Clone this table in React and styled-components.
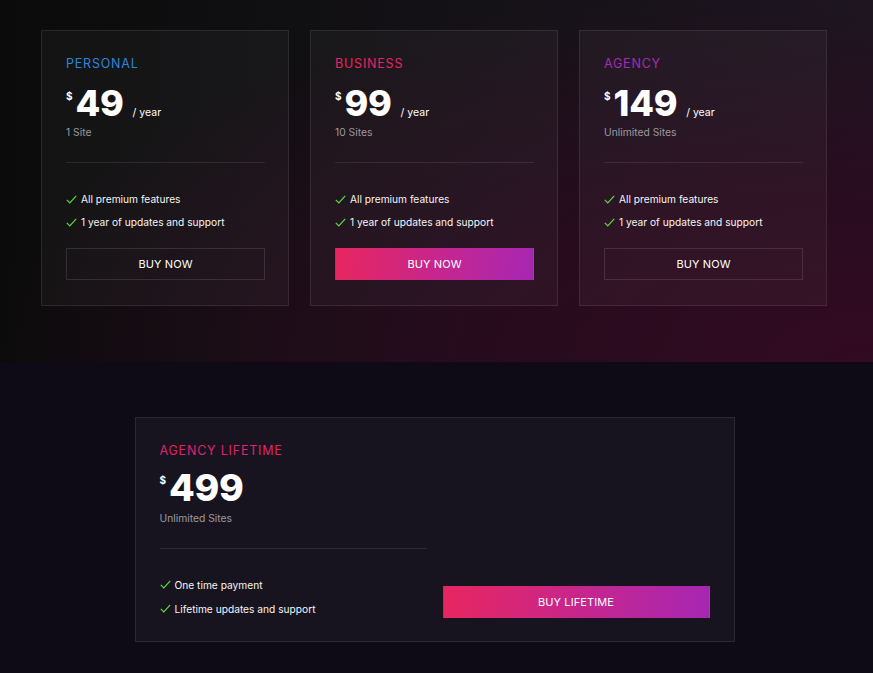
import React from "react";
import styled, { createGlobalStyle } from "styled-components";

const Global = createGlobalStyle`
  html, body { margin: 0; padding: 0; background: #0f0b16; }
  body { font-family: Inter, "Noto Sans", sans-serif; -webkit-font-smoothing: antialiased; }
  * { box-sizing: border-box; }
`;

const Page = styled.div`
  width: 873px;
  min-height: 673px;
  display: flex;
  flex-direction: column;
`;

const TopSection = styled.section`
  height: 362px;
  padding: 30px 5px 0 0;
  display: flex;
  justify-content: center;
  align-items: flex-start;
  gap: 21px;
  background:
    radial-gradient(150% 160% at 100% 100%, rgba(50, 10, 33, 1) 0%, rgba(44, 10, 31, 0.8) 30%, rgba(40, 10, 30, 0) 68%),
    linear-gradient(90deg, #0b0b0b 0%, #131115 50%, #1b1721 100%);
`;

const BottomSection = styled.section`
  flex: 1;
  background: #0f0b16;
  padding: 55px 4px 31px 0;
  display: flex;
  justify-content: center;
`;

const Card = styled.div`
  width: 248px;
  border: 1px solid rgba(255, 255, 255, 0.09);
  background: rgba(255, 255, 255, 0.035);
  padding: 25px 23px 25px 24px;
  display: flex;
  flex-direction: column;
`;

const LifetimeCard = styled.div`
  width: 600px;
  border: 1px solid #2b2733;
  background: #18141f;
  padding: 25px 23px 24px 24px;
  display: grid;
  grid-template-columns: 267px 267px;
  column-gap: 16px;
`;

const Column = styled.div`
  display: flex;
  flex-direction: column;
`;

const RightColumn = styled.div`
  display: flex;
  flex-direction: column;
  justify-content: flex-end;
  margin-bottom: -1px;
`;

const Plan = styled.div`
  font-size: 12.5px;
  line-height: 16px;
  letter-spacing: 0.8px;
  text-transform: uppercase;
  color: ${(p) => p.$color};
`;

const PriceRow = styled.div`
  display: flex;
  align-items: baseline;
  margin-top: ${(p) => p.$gap}px;
  color: #fff;
`;

const Currency = styled.span`
  align-self: flex-start;
  font-size: 10px;
  font-weight: 700;
  line-height: 12px;
  margin-top: 5px;
  margin-right: 3px;
`;

const Amount = styled.span`
  font-size: ${(p) => p.$size}px;
  line-height: ${(p) => p.$size}px;
  font-weight: 800;
  letter-spacing: -0.3px;
`;

const Period = styled.span`
  font-size: 10.5px;
  margin-left: 9px;
  color: #fff;
`;

const Sites = styled.div`
  margin-top: 4px;
  font-size: 10.3px;
  line-height: 14px;
  color: #9c9aa0;
`;

const Divider = styled.hr`
  border: none;
  height: 1px;
  margin: 23px 0 0;
  background: rgba(255, 255, 255, 0.09);
`;

const Features = styled.ul`
  list-style: none;
  margin: ${(p) => p.$mt}px 0 0;
  padding: 0;
  display: flex;
  flex-direction: column;
  gap: ${(p) => p.$gap}px;
`;

const Feature = styled.li`
  display: flex;
  align-items: center;
  gap: 4px;
  font-size: 10.2px;
  line-height: 14px;
  color: #f4f4f4;
`;

const Button = styled.button`
  margin-top: ${(p) => p.$mt || 0}px;
  height: 32px;
  width: 100%;
  font-family: Inter, "Noto Sans", sans-serif;
  font-size: 11px;
  letter-spacing: 0.1px;
  color: #fff;
  cursor: pointer;
  border: 1px solid ${(p) => (p.$primary ? "transparent" : "rgba(255,255,255,0.12)")};
  background: ${(p) =>
    p.$primary ? "linear-gradient(100deg, #e8265f 0%, #c42690 55%, #a627b3 100%)" : "transparent"};
`;

const Check = () => (
  <svg width="11" height="9" viewBox="0 0 11 9" fill="none">
    <polyline points="0.8,4.8 3.8,7.8 10.2,0.9" stroke="#55e03a" strokeWidth="1.2" fill="none" />
  </svg>
);

const plans = [
  { name: "Personal", color: "#2e86dc", price: "49", sites: "1 Site", primary: false },
  { name: "Business", color: "#e62462", price: "99", sites: "10 Sites", primary: true },
  { name: "Agency", color: "#a82ab4", price: "149", sites: "Unlimited Sites", primary: false },
];

const features = ["All premium features", "1 year of updates and support"];

export default function App() {
  return (
    <Page>
      <Global />
      <TopSection>
        {plans.map((p) => (
          <Card key={p.name}>
            <Plan $color={p.color}>{p.name}</Plan>
            <PriceRow $gap={13}>
              <Currency>$</Currency>
              <Amount $size={36}>{p.price}</Amount>
              <Period>/ year</Period>
            </PriceRow>
            <Sites>{p.sites}</Sites>
            <Divider />
            <Features $mt={29} $gap={9}>
              {features.map((f) => (
                <Feature key={f}>
                  <Check />
                  {f}
                </Feature>
              ))}
            </Features>
            <Button $mt={19} $primary={p.primary}>BUY NOW</Button>
          </Card>
        ))}
      </TopSection>
      <BottomSection>
        <LifetimeCard>
          <Column>
            <Plan $color="#e0226f">Agency Lifetime</Plan>
            <PriceRow $gap={10}>
              <Currency>$</Currency>
              <Amount $size={37.5}>499</Amount>
            </PriceRow>
            <Sites>Unlimited Sites</Sites>
            <Divider />
            <Features $mt={29} $gap={10}>
              <Feature>
                <Check />
                One time payment
              </Feature>
              <Feature>
                <Check />
                Lifetime updates and support
              </Feature>
            </Features>
          </Column>
          <RightColumn>
            <Button $primary>BUY LIFETIME</Button>
          </RightColumn>
        </LifetimeCard>
      </BottomSection>
    </Page>
  );
}
